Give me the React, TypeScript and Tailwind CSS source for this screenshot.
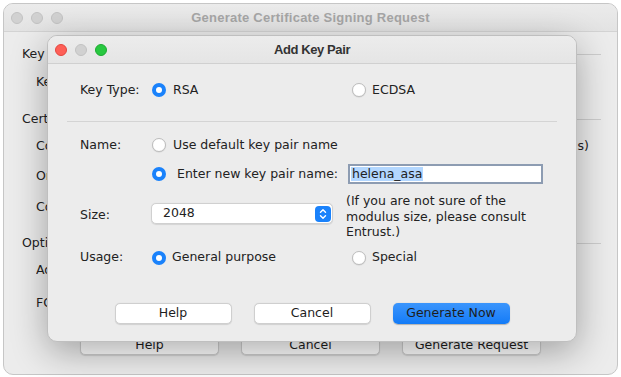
import React from 'react';

const font = "font-['DejaVu_Sans',sans-serif]";
const titleFont = "font-['Liberation_Sans',Arial,sans-serif]";

function Lights({ active }: { active?: boolean }) {
  if (!active) {
    return (
      <div className="flex items-center gap-[8px] w-[52px]">
        <span className="w-[12px] h-[12px] rounded-full bg-[#d1d1d1] border border-[#c2c2c2]" />
        <span className="w-[12px] h-[12px] rounded-full bg-[#d1d1d1] border border-[#c2c2c2]" />
        <span className="w-[12px] h-[12px] rounded-full bg-[#d1d1d1] border border-[#c2c2c2]" />
      </div>
    );
  }
  return (
    <div className="flex items-center gap-[8px] w-[52px]">
      <span className="w-[12px] h-[12px] rounded-full bg-[#fe5f57] border border-[#e2463f]" />
      <span className="w-[12px] h-[12px] rounded-full bg-[#d1d1d1] border border-[#c2c2c2]" />
      <span className="w-[12px] h-[12px] rounded-full bg-[#28c840] border border-[#1eaa32]" />
    </div>
  );
}

function Radio({ checked }: { checked?: boolean }) {
  return checked ? (
    <span className="w-[14px] h-[14px] shrink-0 rounded-full bg-[#1a82fb] flex items-center justify-center">
      <span className="w-[6px] h-[6px] rounded-full bg-white" />
    </span>
  ) : (
    <span className="w-[14px] h-[14px] shrink-0 rounded-full bg-white border border-[#bdbdbd] shadow-[0_0.5px_1px_rgba(0,0,0,0.12)]" />
  );
}

function Btn({ label, primary, wide }: { label: string; primary?: boolean; wide?: boolean }) {
  return (
    <div
      className={
        (wide ? 'w-[139px] h-[20px] ' : 'w-[117px] h-[21px] ') +
        'rounded-[5px] flex items-center justify-center text-[12.5px] text-[#1d1d1d] ' +
        (primary
          ? 'bg-gradient-to-b from-[#3a95fc] to-[#117bf7] shadow-[0_0.5px_1px_rgba(0,0,0,0.25)]'
          : 'bg-white border border-[#cfcfcf] shadow-[0_0.5px_1px_rgba(0,0,0,0.12)]')
      }
    >
      {label}
    </div>
  );
}

// labels of the window behind are mostly covered by the dialog, clip them there
function Section({ label, className }: { label: string; className: string }) {
  return (
    <div className={'flex items-center h-[20px] pl-[18px] pr-[16px] ' + className}>
      <span className="w-[50px] overflow-hidden whitespace-nowrap">{label}</span>
      <span className="flex-1 border-t border-[#cdcdcd]" />
    </div>
  );
}

function Row({ label, className, right }: { label: string; className: string; right?: string }) {
  return (
    <div className={'flex items-center h-[20px] pl-[32px] pr-[28px] ' + className}>
      <span className="w-[32px] overflow-hidden whitespace-nowrap">{label}</span>
      {right && <span className="ml-auto">{right}</span>}
    </div>
  );
}

export default function App() {
  return (
    <div className={'relative w-[621px] h-[377px] overflow-hidden bg-white text-[12.5px] text-[#222] ' + font}>
      {/* background window */}
      <div className="ml-[3px] mt-[3px] w-[615px] h-[372px] rounded-[10px] border border-[#c6c6c6] bg-[#ececec] overflow-hidden flex flex-col">
        <div className="h-[28px] flex items-center px-[7px] bg-gradient-to-b from-[#ebebeb] to-[#e3e3e3] border-b border-[#d3d3d3]">
          <Lights />
          <div className={'flex-1 text-center font-bold text-[13px] tracking-[0.25px] text-[#a6a6a6] ' + titleFont}>
            Generate Certificate Signing Request
          </div>
          <div className="w-[52px]" />
        </div>
        <Section label="Key Pair" className="mt-[12px]" />
        <Row label="Key pair to use:" className="mt-[8px]" />
        <Section label="Certificate Information" className="mt-[17px]" />
        <Row label="Common Name (CN):" className="mt-[7px]" right="s)" />
        <Row label="Organization (O):" className="mt-[10px]" />
        <Row label="Country (C):" className="mt-[11px]" />
        <Section label="Options" className="mt-[16px]" />
        <Row label="Add attributes" className="mt-[7px]" />
        <Row label="FQDN:" className="mt-[13px]" />
        <div className="mt-[22px] flex justify-center gap-[22px]">
          <Btn label="Help" wide />
          <Btn label="Cancel" wide />
          <Btn label="Generate Request" wide />
        </div>
      </div>

      {/* dialog */}
      <div className="absolute left-[47px] top-[35px] w-[530px] h-[307px] rounded-[10px] border border-[#bfbfbf] bg-[#ececec] overflow-hidden shadow-[0_10px_36px_rgba(0,0,0,0.32)] flex flex-col">
        <div className="h-[28px] shrink-0 flex items-center px-[7px] bg-gradient-to-b from-[#ececec] to-[#e5e5e5] border-b border-[#d0d0d0]">
          <Lights active />
          <div className={'flex-1 text-center font-bold text-[13px] tracking-[-0.4px] text-[#333] ' + titleFont}>
            Add Key Pair
          </div>
          <div className="w-[52px]" />
        </div>

        <div className="flex flex-col">
          {/* key type */}
          <div className="mt-[16px] h-[20px] flex items-center pl-[32px]">
            <span className="w-[72px]">Key Type:</span>
            <div className="w-[200px] flex items-center">
              <Radio checked />
              <span className="ml-[7px]">RSA</span>
            </div>
            <div className="flex items-center">
              <Radio />
              <span className="ml-[6px]">ECDSA</span>
            </div>
          </div>

          <div className="mt-[21px] mx-[19px] border-t border-[#d4d4d4]" />

          {/* name */}
          <div className="mt-[13px] h-[20px] flex items-center pl-[32px]">
            <span className="w-[72px]">Name:</span>
            <Radio />
            <span className="ml-[7px]">Use default key pair name</span>
          </div>
          <div className="mt-[9px] h-[20px] flex items-center pl-[104px]">
            <div className="w-[196px] flex items-center">
              <Radio checked />
              <span className="ml-[11px]">Enter new key pair name:</span>
            </div>
            <div className="w-[195px] h-[20px] bg-white border-2 border-[#8d9cb2] flex items-center pl-[1px]">
              <span className="bg-[#b3d7ff] leading-[14px] px-[1px]">helena_asa</span>
            </div>
          </div>

          {/* size */}
          <div className="mt-[9px] flex items-start pl-[32px]">
            <span className="w-[71px] mt-[14px] leading-[15px]">Size:</span>
            <div className="mt-[10px] w-[182px] h-[21px] rounded-[5px] bg-white border border-[#d0d0d0] shadow-[0_0.5px_1px_rgba(0,0,0,0.1)] flex items-center pl-[11px] pr-[1px]">
              <span className="flex-1">2048</span>
              <span className="w-[16px] h-[16px] rounded-[4px] bg-[#1a82fb] flex items-center justify-center">
                <svg width="8" height="12" viewBox="0 0 8 12" fill="none" stroke="white" strokeWidth="1.4" strokeLinecap="round" strokeLinejoin="round">
                  <path d="M1.5 4.2 L4 1.8 L6.5 4.2" />
                  <path d="M1.5 7.8 L4 10.2 L6.5 7.8" />
                </svg>
              </span>
            </div>
            <p className="ml-[13px] leading-[15.5px]">
              (If you are not sure of the
              <br />
              modulus size, please consult
              <br />
              Entrust.)
            </p>
          </div>

          {/* usage */}
          <div className="mt-[8px] h-[20px] flex items-center pl-[32px]">
            <span className="w-[72px]">Usage:</span>
            <div className="w-[200px] flex items-center">
              <Radio checked />
              <span className="ml-[6px]">General purpose</span>
            </div>
            <div className="flex items-center">
              <Radio />
              <span className="ml-[6px]">Special</span>
            </div>
          </div>

          <div className="mt-[35px] flex justify-center gap-[22px]">
            <Btn label="Help" />
            <Btn label="Cancel" />
            <Btn label="Generate Now" primary />
          </div>
        </div>
      </div>
    </div>
  );
}
